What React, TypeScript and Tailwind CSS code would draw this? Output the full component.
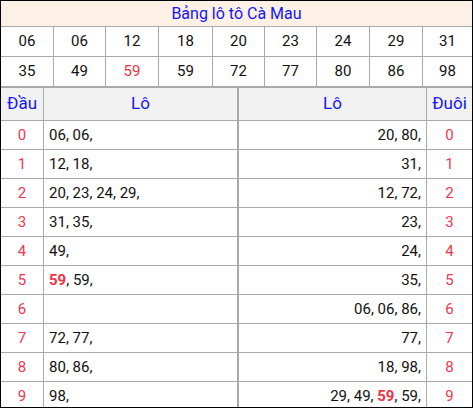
import React from "react";

const top1 = ["06", "06", "12", "18", "20", "23", "24", "29", "31"];
const top2 = ["35", "49", "59", "59", "72", "77", "80", "86", "98"];
const colW = ["w-[52px]", "w-[51px]", "w-[52px]", "w-[53px]", "w-[51px]", "w-[51px]", "w-[52px]", "w-[52px]", "w-[49px]"];

type Item = { v: string; hot?: boolean };
const L: Item[][] = [
  [{ v: "06" }, { v: "06" }],
  [{ v: "12" }, { v: "18" }],
  [{ v: "20" }, { v: "23" }, { v: "24" }, { v: "29" }],
  [{ v: "31" }, { v: "35" }],
  [{ v: "49" }],
  [{ v: "59", hot: true }, { v: "59" }],
  [],
  [{ v: "72" }, { v: "77" }],
  [{ v: "80" }, { v: "86" }],
  [{ v: "98" }],
];
const R: Item[][] = [
  [{ v: "20" }, { v: "80" }],
  [{ v: "31" }],
  [{ v: "12" }, { v: "72" }],
  [{ v: "23" }],
  [{ v: "24" }],
  [{ v: "35" }],
  [{ v: "06" }, { v: "06" }, { v: "86" }],
  [{ v: "77" }],
  [{ v: "18" }, { v: "98" }],
  [{ v: "29" }, { v: "49" }, { v: "59", hot: true }, { v: "59" }],
];

function List({ items }: { items: Item[] }) {
  return (
    <span>
      {items.map((it, i) => (
        <React.Fragment key={i}>
          {i > 0 ? " " : ""}
          {it.hot ? <b className="font-bold text-[#ee3344]">{it.v}</b> : it.v}
          {","}
        </React.Fragment>
      ))}
    </span>
  );
}

export default function App() {
  return (
    <div className="w-[473px] h-[408px] overflow-hidden border border-black bg-white text-[#111] font-['Roboto',sans-serif]">
      <div className="h-[26px] border-b border-[#aaaaaa] bg-[#fdf1e6] flex items-center justify-center text-[16px] text-[#1414ff] leading-none">
        Bảng lô tô Cà Mau
      </div>
      {[top1, top2].map((row, r) => (
        <div key={r} className={r === 1 ? "flex h-[31px] border-b-2 border-[#aaaaaa]" : "flex h-[30px] border-b border-[#aaaaaa]"}>
          {row.map((n, i) => (
            <div
              key={i}
              className={`${colW[i]} ${i < 8 ? "border-r border-[#aaaaaa]" : ""} box-content flex items-center justify-center text-[15px] ${r === 1 && i === 2 ? "text-[#ee3344]" : ""}`}
            >
              {n}
            </div>
          ))}
        </div>
      ))}
      <div className="flex h-[33px] border-b border-[#aaaaaa] bg-[#f2f2f2] text-[#1414ff] text-[17px]">
        <div className="w-[42px] box-content border-r border-[#aaaaaa] flex items-center justify-center">Đầu</div>
        <div className="w-[193px] box-content border-r-2 border-[#aaaaaa] flex items-center justify-center">Lô</div>
        <div className="w-[187px] box-content border-r border-[#aaaaaa] flex items-center justify-center">Lô</div>
        <div className="w-[45px] flex items-center justify-center">Đuôi</div>
      </div>
      {L.map((items, r) => (
        <div key={r} className="flex h-[29px] border-b border-[#aaaaaa] text-[15px]">
          <div className="w-[42px] box-content border-r border-[#aaaaaa] flex items-center justify-center text-[#f0384f]">{r}</div>
          <div className="w-[188px] box-content pl-[5px] border-r-2 border-[#aaaaaa] flex items-center">
            <List items={items} />
          </div>
          <div className="w-[182px] box-content pr-[5px] border-r border-[#aaaaaa] flex items-center justify-end">
            <List items={R[r]} />
          </div>
          <div className="w-[45px] flex items-center justify-center text-[#f0384f]">{r}</div>
        </div>
      ))}
    </div>
  );
}
